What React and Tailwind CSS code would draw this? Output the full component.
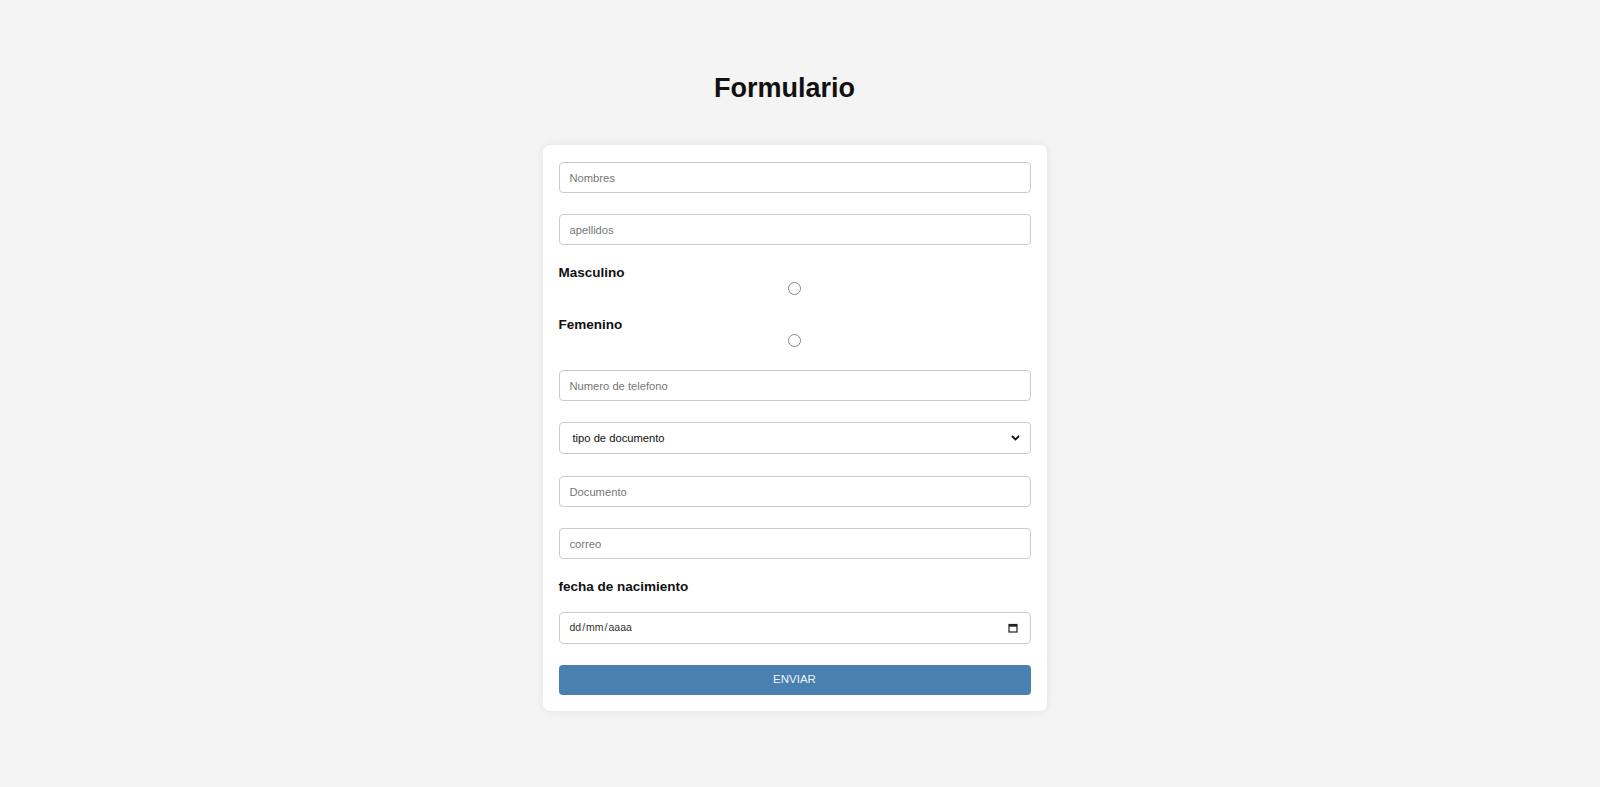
import React from "react";

function TextField({ placeholder, className = "" }) {
  return (
    <input
      type="text"
      placeholder={placeholder}
      className={
        "block w-full h-[31px] px-[10px] border border-[#cccccc] rounded-[4px] bg-white text-[11.2px] text-[#222] placeholder:text-[#777] outline-none font-['Liberation_Sans',Arial,sans-serif] " +
        className
      }
    />
  );
}

function Radio() {
  return (
    <div className="flex justify-center items-center h-[14px]">
      <input
        type="radio"
        name="sexo"
        className="appearance-none w-[13px] h-[13px] rounded-full border border-[#858585] bg-white m-0"
      />
    </div>
  );
}

export default function App() {
  return (
    <div className="min-h-screen bg-[#f4f4f4] font-['Liberation_Sans',Arial,sans-serif] flex flex-col items-center pr-[11px] pt-[73px] pb-[40px]">
      <h1 className="text-[27px] leading-[31px] font-bold text-[#111] mr-[20px]">Formulario</h1>
      <div className="mt-[41px] w-[504px] bg-white rounded-[7px] shadow-[0_0_10px_rgba(0,0,0,0.08)] px-[16px] pt-[17px] pb-[16px]">
        <TextField placeholder="Nombres" />
        <TextField placeholder="apellidos" className="mt-[21px]" />

        <label className="block mt-[20px] text-[13.5px] leading-[16px] font-bold text-[#111]">Masculino</label>
        <Radio />
        <label className="block mt-[22px] text-[13.5px] leading-[16px] font-bold text-[#111]">Femenino</label>
        <Radio />

        <TextField placeholder="Numero de telefono" className="mt-[23px]" />

        <div className="mt-[21px] h-[32px] border border-[#cccccc] rounded-[4px] bg-white flex items-center justify-between pl-[13px] pr-[10px]">
          <span className="text-[11.2px] text-[#111]">tipo de documento</span>
          <svg width="9" height="6" viewBox="0 0 9 6">
            <path d="M1 1 L4.5 4.5 L8 1" fill="none" stroke="#111" strokeWidth="1.8" />
          </svg>
        </div>

        <TextField placeholder="Documento" className="mt-[22px]" />
        <TextField placeholder="correo" className="mt-[21px]" />

        <label className="block mt-[20px] text-[13.5px] leading-[16px] font-bold text-[#111]">fecha de nacimiento</label>

        <div className="mt-[17px] h-[32px] border border-[#cccccc] rounded-[4px] bg-white flex items-center justify-between pl-[10px] pr-[12px]">
          <span className="text-[10.5px] text-[#333]">
            dd<span className="px-[1px]">/</span>mm<span className="px-[1px]">/</span>aaaa
          </span>
          <svg width="10" height="10" viewBox="0 0 10 10">
            <rect x="1" y="1.5" width="8" height="7.5" fill="none" stroke="#222" strokeWidth="1.2" />
            <rect x="1" y="1.5" width="8" height="2.2" fill="#222" />
          </svg>
        </div>

        <button
          type="button"
          className="mt-[21px] block w-full h-[30px] rounded-[4px] bg-[#4a80b0] text-[#eef3f8] text-[11.5px] font-['Liberation_Sans',Arial,sans-serif]"
        >
          ENVIAR
        </button>
      </div>
    </div>
  );
}
